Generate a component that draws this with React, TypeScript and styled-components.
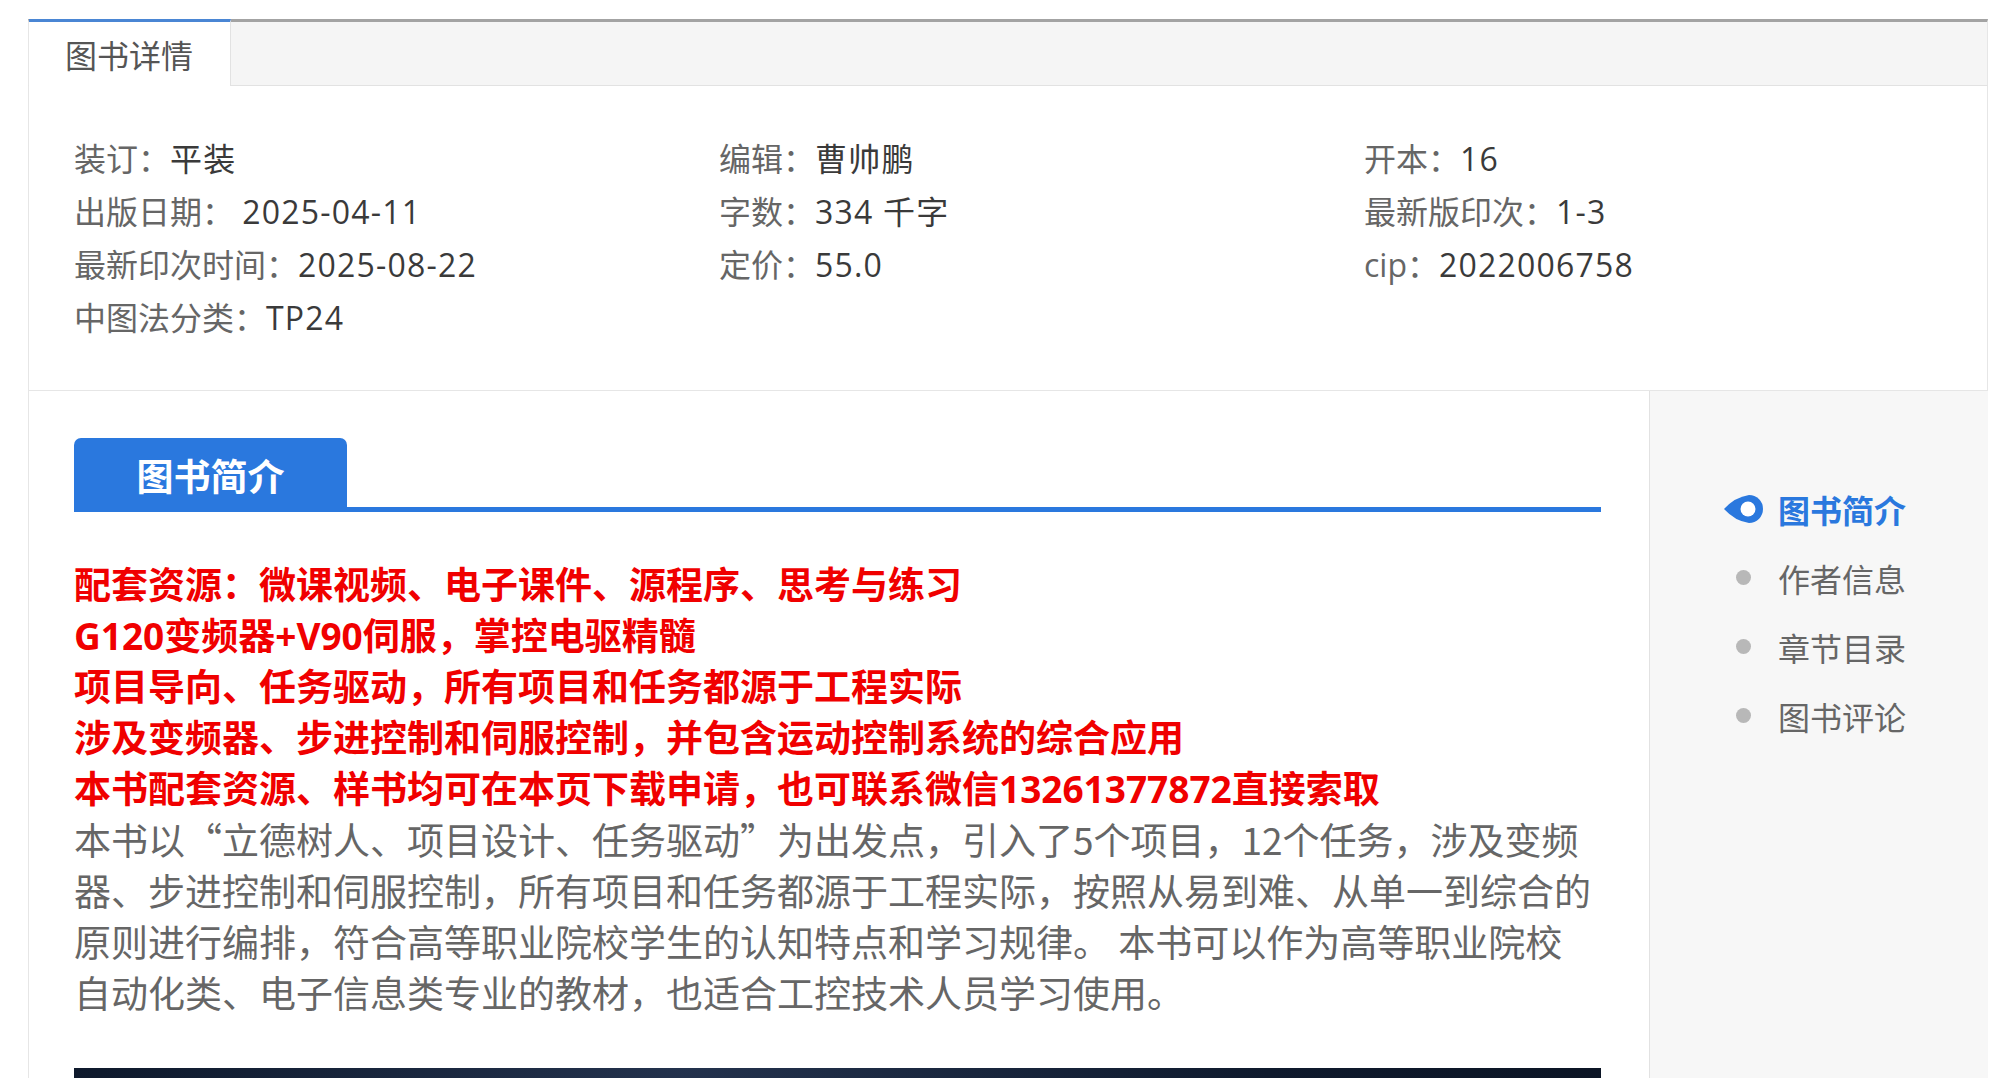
import React from "react";
import styled, { createGlobalStyle } from "styled-components";

const GlobalStyle = createGlobalStyle`
  html, body { margin: 0; padding: 0; background: #ffffff; }
  body { font-family: "Noto Sans CJK SC", "Noto Sans", sans-serif; }
  * { box-sizing: border-box; }
`;

const Page = styled.div`
  padding: 19px 0 0 28px;
`;

const Panel = styled.div`
  width: 1960px;
`;

const TabBar = styled.div`
  display: flex;
  height: 67px;
  background: #f5f5f5;
  border-top: 3px solid #a3a3a3;
  border-bottom: 1px solid #e2e2e2;
  border-left: 1px solid #e6e6e6;
  border-right: 1px solid #e6e6e6;
`;

const Tab = styled.div`
  margin-top: -3px;
  height: 67px;
  padding: 0 37px 0 36px;
  background: #ffffff;
  border-top: 3px solid #4a86d4;
  border-right: 1px solid #e2e2e2;
  font-size: 32px;
  line-height: 65px;
  color: #555555;
`;

const InfoGrid = styled.div`
  display: grid;
  grid-template-columns: 645px 645px 1fr;
  padding: 46px 0 46px 45px;
  border-left: 1px solid #e6e6e6;
  border-right: 1px solid #e6e6e6;
  border-bottom: 1px solid #e6e6e6;
  font-family: "Open Sans", "Noto Sans CJK SC", sans-serif;
  font-size: 32px;
  line-height: 53px;
`;

const InfoItem = styled.div`
  color: #666666;
  white-space: nowrap;
`;

const InfoValue = styled.span`
  color: #3a3a3a;
  letter-spacing: 1.2px;
`;

const Lower = styled.div`
  display: flex;
  border-left: 1px solid #e6e6e6;
`;

const Main = styled.div`
  width: 1620px;
  flex: none;
  padding: 47px 48px 0 45px;
`;

const Heading = styled.div`
  display: flex;
  border-bottom: 5px solid #2a78de;
`;

const HeadingTab = styled.div`
  width: 273px;
  height: 69px;
  padding-top: 5px;
  display: flex;
  align-items: center;
  justify-content: center;
  background: #2a78de;
  border-radius: 7px 7px 0 0;
  color: #ffffff;
  font-size: 37px;
  font-weight: 700;
`;

const Highlights = styled.div`
  margin-top: 47px;
`;

const HighlightLine = styled.div`
  font-family: "Open Sans", "Noto Sans CJK SC", sans-serif;
  font-size: 37px;
  font-weight: 700;
  line-height: 51px;
  color: #f00000;
  white-space: nowrap;
`;

const Intro = styled.p`
  margin: 0;
  max-width: 1521px;
  font-size: 37px;
  line-height: 51px;
  color: #666666;
`;

const CoverStrip = styled.div`
  margin-top: 50px;
  height: 300px;
  background: radial-gradient(ellipse at 40% 0%, #23324d 0%, #0f1a2d 45%, #080f1c 100%);
`;

const Sidebar = styled.div`
  flex: 1;
  background: #f7f7f7;
  border-left: 1px solid #e2e2e2;
  padding: 83px 0 0 72px;
`;

const NavItem = styled.div<{ $active?: boolean }>`
  display: flex;
  align-items: center;
  gap: 14px;
  height: 69px;
  font-size: 32px;
  font-weight: ${(p) => (p.$active ? 700 : 400)};
  color: ${(p) => (p.$active ? "#2a78de" : "#666666")};
`;

const NavMarker = styled.div`
  width: 42px;
  display: flex;
  align-items: center;
  justify-content: center;
`;

const Dot = styled.span`
  width: 15px;
  height: 15px;
  border-radius: 50%;
  background: #b8b8b8;
`;

const ActiveMarker = () => (
  <svg width="42" height="30" viewBox="0 0 42 30">
    <path d="M2 15 Q 13 3 27 1 A 14 14 0 0 1 27 29 Q 13 27 2 15 Z" fill="#2a78de" />
    <circle cx="26" cy="15" r="7.5" fill="#ffffff" />
  </svg>
);

const info: [string, string][] = [
  ["装订：", "平装"],
  ["编辑：", "曹帅鹏"],
  ["开本：", "16"],
  ["出版日期： ", "2025-04-11"],
  ["字数：", "334 千字"],
  ["最新版印次：", "1-3"],
  ["最新印次时间：", "2025-08-22"],
  ["定价：", "55.0"],
  ["cip：", "2022006758"],
  ["中图法分类：", "TP24"],
];

const highlights = [
  "配套资源：微课视频、电子课件、源程序、思考与练习",
  "G120变频器+V90伺服，掌控电驱精髓",
  "项目导向、任务驱动，所有项目和任务都源于工程实际",
  "涉及变频器、步进控制和伺服控制，并包含运动控制系统的综合应用",
  "本书配套资源、样书均可在本页下载申请，也可联系微信13261377872直接索取",
];

const nav = ["图书简介", "作者信息", "章节目录", "图书评论"];

export default function App() {
  return (
    <>
      <GlobalStyle />
      <Page>
        <Panel>
          <TabBar>
            <Tab>图书详情</Tab>
          </TabBar>
          <InfoGrid>
            {info.map(([label, value]) => (
              <InfoItem key={label}>
                {label}
                <InfoValue>{value}</InfoValue>
              </InfoItem>
            ))}
          </InfoGrid>
          <Lower>
            <Main>
              <Heading>
                <HeadingTab>图书简介</HeadingTab>
              </Heading>
              <Highlights>
                {highlights.map((h) => (
                  <HighlightLine key={h}>{h}</HighlightLine>
                ))}
              </Highlights>
              <Intro>
                本书以“立德树人、项目设计、任务驱动”为出发点，引入了5个项目，12个任务，涉及变频器、步进控制和伺服控制，所有项目和任务都源于工程实际，按照从易到难、从单一到综合的原则进行编排，符合高等职业院校学生的认知特点和学习规律。 本书可以作为高等职业院校自动化类、电子信息类专业的教材，也适合工控技术人员学习使用。
              </Intro>
              <CoverStrip />
            </Main>
            <Sidebar>
              {nav.map((n, i) => (
                <NavItem key={n} $active={i === 0}>
                  <NavMarker>{i === 0 ? <ActiveMarker /> : <Dot />}</NavMarker>
                  {n}
                </NavItem>
              ))}
            </Sidebar>
          </Lower>
        </Panel>
      </Page>
    </>
  );
}
